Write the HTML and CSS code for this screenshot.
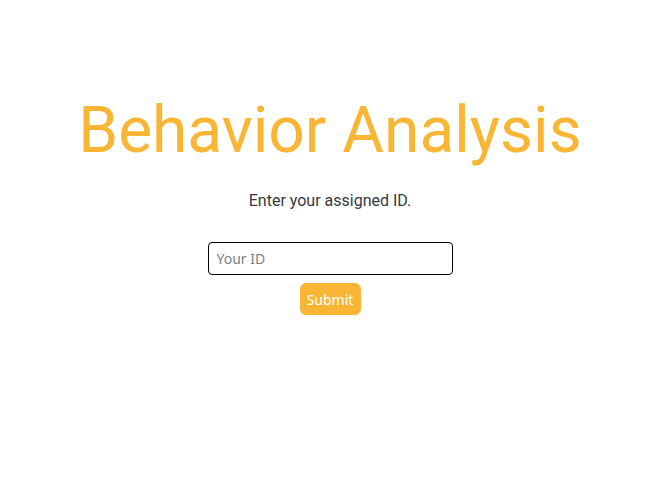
FILE: index.html
```html
<!DOCTYPE html>
<html>
<head>
<meta charset="utf-8">
<link rel="stylesheet" href="styles.css">
</head>
<body>
<main class="page">
  <h1 class="title">Behavior Analysis</h1>
  <p class="lead">Enter your assigned ID.</p>
  <form class="form">
    <input class="field" type="text" placeholder="Your ID">
    <button class="btn" type="button">Submit</button>
  </form>
</main>
</body>
</html>
```
FILE: styles.css
```css
html, body { margin: 0; padding: 0; background: #fff; }
.page {
  display: flex;
  flex-direction: column;
  align-items: center;
  padding: 91px 4px 0 0;
  font-family: Roboto, sans-serif;
}
.title {
  margin: 0;
  font-family: Roboto, sans-serif;
  font-weight: 400;
  font-size: 64px;
  line-height: 80px;
  color: #f8b634;
}
.lead {
  margin: 20px 0 0;
  font-size: 16px;
  line-height: 20px;
  color: #343a40;
}
.form {
  margin-top: 31px;
  display: flex;
  flex-direction: column;
  align-items: center;
  gap: 8px;
}
.field {
  box-sizing: border-box;
  width: 245px;
  height: 33px;
  margin: 0;
  padding: 0 8px;
  border: 1px solid #000;
  border-radius: 4px;
  font-family: "Noto Sans", sans-serif;
  font-size: 14px;
  color: #333;
  outline: none;
}
.field::placeholder { color: #7a7f85; }
.btn {
  box-sizing: border-box;
  width: 61px;
  height: 32px;
  padding: 0;
  border: none;
  border-radius: 6px;
  background: #f8b634;
  color: #fff;
  font-family: "Noto Sans", sans-serif;
  font-size: 14px;
}
```
